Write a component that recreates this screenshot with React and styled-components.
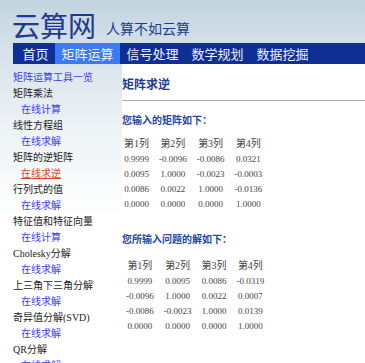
import React from "react";
import styled, { createGlobalStyle } from "styled-components";

const Global = createGlobalStyle`
  html, body { margin: 0; padding: 0; }
  body {
    width: 365px;
    height: 363px;
    overflow: hidden;
    background: linear-gradient(to bottom, #c3d4e0 0px, #dbe5ed 64px, #eef3f6 130px, #ffffff 220px) no-repeat;
    font-family: "Noto Sans CJK SC", "Noto Sans", sans-serif;
  }
`;

const Page = styled.div`
  display: flex;
  flex-direction: column;
  width: 365px;
`;

const Header = styled.header`
  display: flex;
  align-items: flex-end;
  height: 43px;
  box-sizing: border-box;
  padding: 0 0 2px 12px;
  gap: 10px;
`;

const SiteTitle = styled.h1`
  margin: 0;
  font-size: 28px;
  line-height: 32px;
  font-weight: 400;
  color: #1e3b8e;
`;

const Slogan = styled.span`
  font-size: 14px;
  line-height: 16px;
  color: #1e3b8e;
  margin-bottom: 5px;
`;

const Nav = styled.nav`
  display: flex;
  margin-left: 13px;
  padding-left: 3px;
  height: 21px;
  background: #0f2f95;
`;

const NavItem = styled.a`
  display: block;
  padding: 0 6.5px;
  font-size: 13px;
  line-height: 21px;
  color: #eef2fb;
  text-decoration: none;
  background: ${(p) => (p.$active ? "#3a7af2" : "transparent")};
`;

const Body = styled.div`
  display: flex;
  align-items: stretch;
`;

const Sidebar = styled.aside`
  width: 122px;
  flex: none;
  padding: 6px 0 0 0;
  display: flex;
  flex-direction: column;
`;

const SideLine = styled.a`
  display: block;
  font-size: 10px;
  line-height: 16px;
  height: 16px;
  white-space: nowrap;
  padding-left: ${(p) => (p.$sub ? "21px" : "13px")};
  color: ${(p) => (p.$current ? "#d9452a" : p.$link ? "#3b3bf2" : "#222")};
  text-decoration: ${(p) => (p.$current ? "underline" : "none")};
  font-family: "Liberation Serif", "Noto Sans CJK SC", serif;
`;

const Main = styled.main`
  flex: 1;
  background: #fff;
  min-height: 300px;
  padding-top: 12px;
`;

const Heading = styled.h2`
  margin: 0;
  font-size: 12px;
  line-height: 16px;
  font-weight: 700;
  color: #1f3d94;
`;

const Rule = styled.hr`
  margin: 8px 0 0 0;
  border: none;
  border-top: 1px solid #b0b0b0;
  height: 0;
`;

const SubHeading = styled.h3`
  margin: ${(p) => p.$top}px 0 0 0;
  font-size: 10px;
  line-height: 14px;
  font-weight: 700;
  color: #2746a3;
`;

const Matrix = styled.table`
  margin-top: ${(p) => p.$top}px;
  margin-left: ${(p) => p.$left}px;
  border-collapse: collapse;
  font-family: "Liberation Serif", "Noto Sans CJK SC", serif;
  font-size: 9px;
  color: #444;
`;

const Cell = styled.td`
  padding: 2px 5px;
  height: 11px;
  line-height: 11px;
  text-align: center;
  white-space: nowrap;
`;

const HeadCell = styled(Cell).attrs({ as: "th" })`
  font-weight: 400;
  font-size: 10px;
  padding-bottom: 3px;
`;

const menu = [
  { t: "矩阵运算工具一览", link: true, main: true },
  { t: "矩阵乘法" },
  { t: "在线计算", link: true, sub: true },
  { t: "线性方程组" },
  { t: "在线求解", link: true, sub: true },
  { t: "矩阵的逆矩阵" },
  { t: "在线求逆", link: true, sub: true, current: true },
  { t: "行列式的值" },
  { t: "在线求解", link: true, sub: true },
  { t: "特征值和特征向量" },
  { t: "在线计算", link: true, sub: true },
  { t: "Cholesky分解" },
  { t: "在线求解", link: true, sub: true },
  { t: "上三角下三角分解" },
  { t: "在线求解", link: true, sub: true },
  { t: "奇异值分解(SVD)" },
  { t: "在线求解", link: true, sub: true },
  { t: "QR分解" },
  { t: "在线求解", link: true, sub: true },
];

const input = [
  ["0.9999", "-0.0096", "-0.0086", "0.0321"],
  ["0.0095", "1.0000", "-0.0023", "-0.0003"],
  ["0.0086", "0.0022", "1.0000", "-0.0136"],
  ["0.0000", "0.0000", "0.0000", "1.0000"],
];

const result = [
  ["0.9999", "0.0095", "0.0086", "-0.0319"],
  ["-0.0096", "1.0000", "0.0022", "0.0007"],
  ["-0.0086", "-0.0023", "1.0000", "0.0139"],
  ["0.0000", "0.0000", "0.0000", "1.0000"],
];

function MatrixTable({ rows, top, left }) {
  return (
    <Matrix $top={top} $left={left}>
      <thead>
        <tr>
          {["第1列", "第2列", "第3列", "第4列"].map((h) => (
            <HeadCell key={h}>{h}</HeadCell>
          ))}
        </tr>
      </thead>
      <tbody>
        {rows.map((r, i) => (
          <tr key={i}>
            {r.map((v, j) => (
              <Cell key={j}>{v}</Cell>
            ))}
          </tr>
        ))}
      </tbody>
    </Matrix>
  );
}

export default function App() {
  return (
    <Page>
      <Global />
      <Header>
        <SiteTitle>云算网</SiteTitle>
        <Slogan>人算不如云算</Slogan>
      </Header>
      <Nav>
        <NavItem>首页</NavItem>
        <NavItem $active>矩阵运算</NavItem>
        <NavItem>信号处理</NavItem>
        <NavItem>数学规划</NavItem>
        <NavItem>数据挖掘</NavItem>
      </Nav>
      <Body>
        <Sidebar>
          {menu.map((m, i) => (
            <SideLine key={i} $link={m.link} $sub={m.sub} $current={m.current}>
              {m.t}
            </SideLine>
          ))}
        </Sidebar>
        <Main>
          <Heading>矩阵求逆</Heading>
          <Rule />
          <SubHeading $top={12}>您输入的矩阵如下：</SubHeading>
          <MatrixTable rows={input} top={9} left={-3} />
          <SubHeading $top={20}>您所输入问题的解如下：</SubHeading>
          <MatrixTable rows={result} top={12} left={-1} />
        </Main>
      </Body>
    </Page>
  );
}
